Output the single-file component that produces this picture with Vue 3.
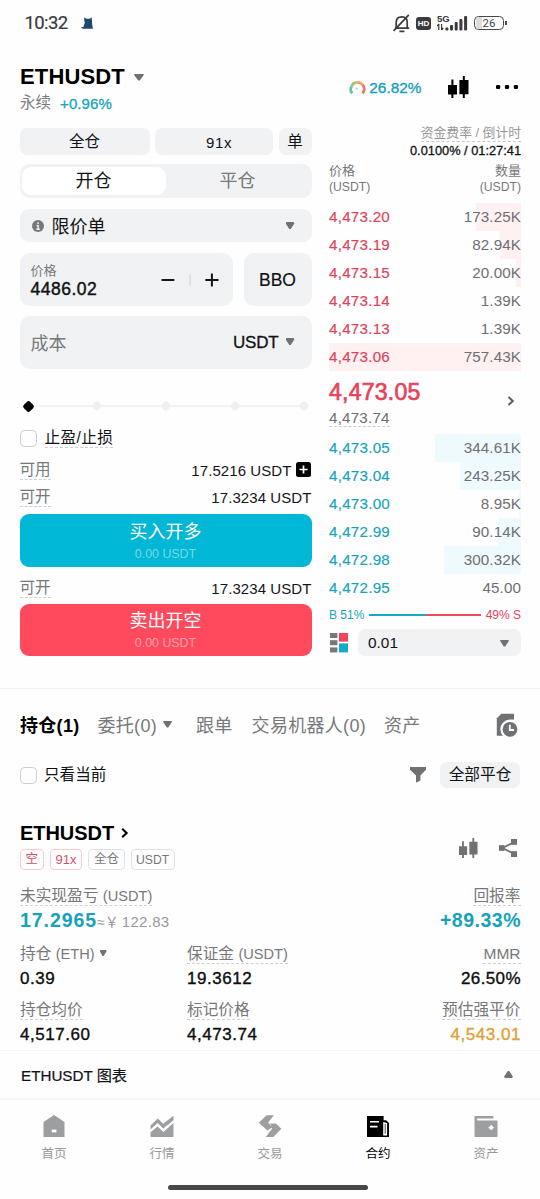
<script setup>
const asks = [
  { price: '4,473.20', qty: '173.25K', depth: 23.5 },
  { price: '4,473.19', qty: '82.94K', depth: 11 },
  { price: '4,473.15', qty: '20.00K', depth: 2.5 },
  { price: '4,473.14', qty: '1.39K', depth: 0 },
  { price: '4,473.13', qty: '1.39K', depth: 0 },
  { price: '4,473.06', qty: '757.43K', depth: 100 },
]
const bids = [
  { price: '4,473.05', qty: '344.61K', depth: 45 },
  { price: '4,473.04', qty: '243.25K', depth: 32 },
  { price: '4,473.00', qty: '8.95K', depth: 1 },
  { price: '4,472.99', qty: '90.14K', depth: 12 },
  { price: '4,472.98', qty: '300.32K', depth: 40 },
  { price: '4,472.95', qty: '45.00', depth: 0 },
]
const steps = [0, 1, 2, 3, 4]
</script>

<template>
  <div class="screen">
    <header class="status">
      <span class="clock">10:32</span>
      <svg class="cat" width="12" height="12" viewBox="0 0 12 12"><path d="M3.2 3.2 3.4.2 5.3 1.7h3.5L10.6.2l.4 3v2.9l.9 5.6H2.400C1 11.700.1 10.800.1 9.700c1 .8 2 .6 2.500-.2L3.800 6z" fill="#1f4770" /></svg>
      <span class="grow"></span>
      <svg class="bell" width="18" height="19" viewBox="0 0 18 19" fill="none" stroke="#3b3b3e" stroke-width="1.7">
        <path d="M3.2 13.4V8.2C3.2 4.6 5.5 2.9 8.8 2.9s5.4 1.9 5.4 5.3v5.2M1.8 14.2h14.4M15.8.9.6 16.8M6.4 17.4h5" />
      </svg>
      <span class="hd">HD</span>
      <svg class="signal" width="31" height="18" viewBox="0 0 31 18">
        <text x="0" y="8" class="g5">5G</text>
        <path d="M1.8 10v6M0 12.2 1.8 10M4.600 10v6M4.600 16l1.700-2" stroke="#3b3b3e" stroke-width="1.2" fill="none" />
        <g fill="#3b3b3e"><rect x="8.4" y="13.6" width="3" height="2.8" rx="1" /><rect x="13" y="11" width="3" height="5.4" rx="1" /><rect x="17.7" y="8" width="3" height="8.4" rx="1" /><rect x="22.4" y="5" width="3" height="11.4" rx="1" /><rect x="27.1" y="2" width="3" height="14.4" rx="1" /></g>
      </svg>
      <span class="battery"><i></i><b>26</b></span><span class="nub"></span>
    </header>

    <section class="head">
      <div>
        <div class="pair">ETHUSDT <i class="caret big"></i></div>
        <div class="sub"><span>永续</span><b>+0.96%</b></div>
      </div>
      <span class="grow"></span>
      <svg class="gauge" width="17" height="16" viewBox="0 0 17 16" fill="none" stroke-width="2.8">
        <path d="M3.2 13.4A6.4 6.4 0 0 1 2.5 6.4" stroke="#62c5a4" /><path d="M2.5 6.4A6.4 6.4 0 0 1 7.6 2.4" stroke="#a7c278" /><path d="M7.6 2.4A6.4 6.4 0 0 1 13.7 4.8" stroke="#efa35d" /><path d="M13.7 4.8A6.4 6.4 0 0 1 13.5 13.4" stroke="#e9765d" />
        <path d="M6.8 7.6 8.5 9.6" stroke="#b8c5c5" stroke-width="1.3" />
      </svg>
      <span class="ratio">26.82%</span>
      <svg class="candles" width="21" height="22" viewBox="0 0 21 22"><path d="M0 9h3.4V3.6h2V9H9v9.6H5.4V22h-2v-3.4H0zM11.4 4h3.4V0h2v4h3.7v14.2h-3.7V22h-2v-3.8h-3.4z" /></svg>
      <svg class="dots" width="24" height="6" viewBox="0 0 24 6"><rect x="0" y=".8" width="4.4" height="4.4" rx="1.3" /><rect x="9.3" y=".8" width="4.4" height="4.4" rx="1.3" /><rect x="18.6" y=".8" width="4.4" height="4.4" rx="1.3" /></svg>
    </section>

    <main class="trade">
      <div class="form">
        <div class="modes"><span>全仓</span><span class="lev">91x</span><span>单</span></div>
        <div class="segment"><span class="on">开仓</span><span>平仓</span></div>
        <div class="select">
          <svg width="12" height="12" viewBox="0 0 12 12"><circle cx="6" cy="6" r="6" fill="#77787b" /><path d="M6 2.2v2M4.6 5.6h1.6v3.8M4.4 9.2h3.4" stroke="#f1f2f4" stroke-width="1.4" fill="none" /></svg>
          <span>限价单</span><i class="caret"></i>
        </div>
        <div class="price-row">
          <div class="price">
            <div><small>价格</small><strong>4486.02</strong></div>
            <svg width="58" height="16" viewBox="0 0 58 16" fill="none" stroke="#151619" stroke-width="2"><path d="M.5 8h12.8M44.3 8h13.2M50.9 1.4v13.2" /><path d="M29 2.5v11" stroke="#c9cbce" stroke-width="1" /></svg>
          </div>
          <div class="bbo">BBO</div>
        </div>
        <div class="cost"><span>成本</span><b>USDT</b><i class="caret"></i></div>
        <div class="slider"><i v-for="s in steps" :key="s" :class="{ on: s === 0 }"></i></div>
        <div class="check tpsl"><i></i><span class="dash">止盈/止损</span></div>
        <div class="avail a1"><span class="dash">可用</span><b>17.5216 USDT</b>
          <svg width="15" height="15" viewBox="0 0 15 15"><rect width="15" height="15" rx="2.5" /><path d="M3.4 7.5h8.2M7.5 3.4v8.2" stroke="#fff" stroke-width="1.7" /></svg>
        </div>
        <div class="avail a2"><span class="dash">可开</span><b>17.3234 USDT</b></div>
        <button class="buy">买入开多<small>0.00 USDT</small></button>
        <div class="avail a3"><span class="dash">可开</span><b>17.3234 USDT</b></div>
        <button class="sell">卖出开空<small>0.00 USDT</small></button>
      </div>

      <div class="book">
        <div class="rate"><span>资金费率 / 倒计时</span></div>
        <div class="count">0.0100% / 01:27:41</div>
        <div class="cols"><div>价格<br /><em>(USDT)</em></div><div>数量<br /><em>(USDT)</em></div></div>
        <div class="rows asks">
          <div v-for="r in asks" :key="r.price" class="row"><i :style="{ width: r.depth + '%' }"></i><span>{{ r.price }}</span><b>{{ r.qty }}</b></div>
        </div>
        <div class="last">
          <div><strong>4,473.05</strong><span class="dash">4,473.74</span></div>
          <svg width="8" height="10" viewBox="0 0 8 10" fill="none" stroke="#5c5d60" stroke-width="2"><path d="M1.5 1 5.8 5 1.5 9" /></svg>
        </div>
        <div class="rows bids">
          <div v-for="r in bids" :key="r.price" class="row"><i :style="{ width: r.depth + '%' }"></i><span>{{ r.price }}</span><b>{{ r.qty }}</b></div>
        </div>
        <div class="balance"><span>B 51%</span><i></i><em>49% S</em></div>
        <div class="tick">
          <svg width="18" height="20" viewBox="0 0 18 20"><g fill="#77787b"><rect width="7.4" height="5" /><rect y="7.2" width="7.4" height="5" /><rect y="14.4" width="7.4" height="5" /></g><rect x="9" width="9" height="8.6" fill="#f04459" /><rect x="9" y="10.4" width="9" height="9" fill="#13acc8" /></svg>
          <div>0.01<i class="caret"></i></div>
        </div>
      </div>
    </main>

    <nav class="tabs">
      <b>持仓(1)</b><span class="t2">委托(0)<i class="caret"></i></span><span class="t3">跟单</span><span class="t4">交易机器人(0)</span><span class="t5">资产</span>
      <span class="grow"></span>
      <svg width="22" height="24" viewBox="0 0 22 24"><path d="M5.3.8H18v22H.8V5.3z" fill="#707174" /><path d="M14 6.6a9.7 9.7 0 1 0 0 19.400h8V6.600z" fill="#fefefe" /><circle cx="14" cy="16.3" r="7.4" fill="#707174" /><path d="M13.8 11.8V17H18" fill="none" stroke="#fff" stroke-width="1.8" /></svg>
    </nav>

    <div class="filter">
      <div class="check"><i></i><span>只看当前</span></div><span class="grow"></span>
      <svg width="16" height="16" viewBox="0 0 16 16"><path d="M0 0h16v2.8L10.4 8.600v5L6 15.800V8.600L0 2.800z" fill="#707174" /></svg>
      <span class="closeall">全部平仓</span>
    </div>

    <section class="position">
      <div class="ptop">
        <div>
          <div class="pname">ETHUSDT<svg width="8" height="10" viewBox="0 0 8 10" fill="none" stroke="#000" stroke-width="2.1"><path d="M1.2 .8 5.6 5 1.2 9.2" /></svg></div>
          <div class="tags"><span class="red">空</span><span class="red num">91x</span><span>全仓</span><span class="usdt">USDT</span></div>
        </div>
        <span class="grow"></span>
        <svg class="pc" width="19" height="20" viewBox="0 0 21 22" fill="#707174"><path d="M0 9h3.4V3.6h2V9H9v9.6H5.4V22h-2v-3.4H0zM11.4 4h3.4V0h2v4h3.7v14.2h-3.7V22h-2v-3.8h-3.4z" /></svg>
        <svg class="share" width="18" height="18" viewBox="0 0 18 18"><path d="M15 3.2 3.5 9 15 14.8" fill="none" stroke="#707174" stroke-width="1.8" /><g fill="#707174"><rect y="6.2" width="5.4" height="5.6" /><rect x="12" width="6" height="5.8" /><rect x="12" y="12.2" width="6" height="5.8" /></g></svg>
      </div>
      <div class="stats pnl">
        <div><label class="dash">未实现盈亏 <em>(USDT)</em></label><p class="teal">17.2965<span>≈￥<u>122.83</u></span></p></div>
        <div class="r"><label class="dash">回报率</label><p class="teal">+89.33%</p></div>
      </div>
      <div class="stats">
        <div><label>持仓 <em>(ETH)</em><i class="caret sm"></i></label><p>0.39</p></div>
        <div><label class="dash">保证金 <em>(USDT)</em></label><p>19.3612</p></div>
        <div class="r"><label class="dash mmr">MMR</label><p class="pct">26.50%</p></div>
      </div>
      <div class="stats last3">
        <div><label class="dash">持仓均价</label><p>4,517.60</p></div>
        <div><label class="dash">标记价格</label><p>4,473.74</p></div>
        <div class="r"><label class="dash">预估强平价</label><p class="amber">4,543.01</p></div>
      </div>
    </section>

    <div class="chart"><span>ETHUSDT 图表</span><i class="caret up"></i></div>

    <footer class="nav">
      <div><svg width="22" height="22" viewBox="0 0 22 22"><path d="M11 0 21.5 7v15H.5V7z" /><rect x="8.8" y="14.6" width="4.6" height="2.8" fill="#fff" /></svg>首页</div>
      <div><svg width="24" height="22" viewBox="0 0 24 22"><path d="M.5 10.6 7.8 3.6l5.4 5.2L23.5.8v4.4L13.2 13.4 7.6 8 .5 14.6zM.5 17.3l7.1-5.9 5.8 5.6L23.5 8v14H.5z" /></svg>行情</div>
      <div><svg width="24" height="22" viewBox="0 0 24 22"><path d="M8.6.2H16L10.200 7.600 14 12.400 9.400 15.400.8 7.800zM12 8.400h5.800l5.600 5.400-8 8.200H7.800l6.400-8.400z" /></svg>交易</div>
      <div class="active"><svg width="24" height="22" viewBox="0 0 24 22"><path d="M1 1h16.6v4.2h2.6L23 8v14H1z" /><path d="M4 6.8h9M4 11.6h7.500M18 8v11.600h2.300V8.600z" stroke="#fff" stroke-width="1.6" fill="none" /></svg>合约</div>
      <div><svg width="24" height="22" viewBox="0 0 24 22"><path d="M.5 1h19v2.6H3v2h20.500V22H.5z" /><path d="M17.3 10.2 19.600 12.600 17.300 15 15 12.600z" fill="#fff" stroke="#fff" /></svg>资产</div>
    </footer>
    <div class="home"></div>
  </div>
</template>

<style>
body { background: #fefefe; }
</style>

<style scoped>
* { box-sizing: border-box; }
.screen { width: 540px; height: 1199px; overflow: hidden; background: #fefefe; color: #111215; font-family: "Liberation Sans", "Noto Sans CJK SC", sans-serif; display: flex; flex-direction: column; white-space: nowrap; }
.screen > * { flex: none; }
svg { display: block; flex: none; }
em, i, u { font-style: normal; text-decoration: none; }
b { font-weight: 400; }
.grow { flex: 1; }
.caret { display: inline-block; width: 9px; height: 7px; background: #707174; clip-path: polygon(0 18%, 12% 0, 88% 0, 100% 18%, 58% 100%, 42% 100%); }
.caret.big { width: 10px; }
.caret.sm { width: 7px; height: 6px; }
.caret.up { transform: rotate(180deg); margin-top: 2px; }
.dash { border-bottom: 1px dashed #cfd0d3; }

.status { height: 46px; display: flex; align-items: center; padding: 0 33px 0 24.5px; }
.clock { font: 400 18.5px/24px Roboto, sans-serif; letter-spacing: -0.6px; color: #38393c; width: 56px; -webkit-text-stroke: .2px; }
.hd { width: 15px; height: 13px; border-radius: 3px; background: #3b3b3e; color: #fff; font: 700 8px/13px "Liberation Sans", sans-serif; text-align: center; margin: 1px 6px 0 5px; }
.g5 { font: 700 9.5px "Liberation Sans", sans-serif; fill: #3b3b3e; }
.battery { display: flex; width: 30px; height: 14px; border: 1.5px solid #47484b; border-radius: 4.5px; margin-left: 6px; color: #47484b; position: relative; justify-content: center; overflow: hidden; }
.battery i { position: absolute; left: 1px; top: 0; width: 6px; height: 12px; background: #dcdcde; }
.battery b { position: relative; font: 400 11.5px/13px Roboto, sans-serif; }
.nub { width: 2px; height: 4px; background: #47484b; margin-left: 1px; }

.head { height: 74px; padding: 18px 21.5px 0 20px; display: flex; }
.pair { font-size: 22px; font-weight: 700; line-height: 26px; letter-spacing: .15px; display: flex; align-items: center; color: #000; }
.pair .caret { margin-left: 9px; }
.sub { font-size: 15.5px; line-height: 20px; margin-top: 3px; color: #7b7c7f; display: flex; gap: 9px; }
.sub b { font-size: 15px; color: #16a5ba; letter-spacing: .1px; line-height: 21px; -webkit-text-stroke: .3px; }
.gauge { margin-top: 16px; }
.ratio { font-size: 15.4px; line-height: 20px; margin: 14px 26px 0 3px; color: #16a0bc; -webkit-text-stroke: .35px; }
.candles { margin-top: 12px; }
.dots { margin: 20px 0 0 27px; width: 23px; }

.trade { display: flex; padding: 0 19px 0 19.5px; gap: 17.5px; height: 536px; }
.form { width: 292px; padding-top: 8px; }
.modes { display: flex; height: 27px; gap: 5.5px; font-size: 15.5px; line-height: 27px; text-align: center; }
.modes span { background: #f1f2f4; border-radius: 7px; width: 33px; }
.modes span:first-child { width: 130px; }
.modes .lev { width: 118px; font-size: 15px; letter-spacing: .6px; line-height: 29px; padding-left: 10px; }
.segment { display: flex; margin-top: 9px; height: 34px; padding: 3px 2px; border-radius: 10px; background: #f1f2f4; font-size: 18px; line-height: 29px; text-align: center; color: #77787b; }
.segment span { flex: 1; }
.segment .on { background: #fff; border-radius: 9px; color: #111215; }
.select { display: flex; align-items: center; height: 33px; margin-top: 11px; padding: 0 17px 0 12px; border-radius: 9px; background: #f1f2f4; font-size: 18px; }
.select span { flex: 1; margin: -2px 0 0 8px; }
.price-row { display: flex; gap: 11px; height: 53px; margin-top: 11px; }
.price { width: 213px; border-radius: 10px; background: #f1f2f4; padding: 9px 14px 0 11px; display: flex; justify-content: space-between; }
.price svg { margin-top: 10px; }
.price small { display: block; font-size: 13px; line-height: 17px; color: #77787b; }
.price strong { display: block; font-size: 17.5px; font-weight: 400; line-height: 20px; letter-spacing: .5px; -webkit-text-stroke: .45px; }
.bbo { flex: 1; border-radius: 10px; background: #f1f2f4; text-align: center; font-size: 17.5px; line-height: 54px; -webkit-text-stroke: .2px; }
.cost { display: flex; align-items: center; height: 53px; margin-top: 10px; padding: 0 17px 2px 11px; border-radius: 10px; background: #f1f2f4; font-size: 18px; color: #77787b; }
.cost span { flex: 1; }
.cost b { font-size: 17px; color: #111215; letter-spacing: -.2px; margin-right: 7px; -webkit-text-stroke: .3px; padding-top: 2px; }
.slider { display: flex; justify-content: space-between; align-items: center; height: 18px; margin-top: 28px; padding: 0 4px; background: linear-gradient(#f1f2f3, #f1f2f3) center / 276px 2px no-repeat; }
.slider i { width: 8px; height: 8px; border-radius: 2.5px; background: #eff0f1; transform: rotate(45deg); }
.slider .on { background: #000; width: 9px; height: 9px; }
.check { display: flex; align-items: center; font-size: 15.6px; line-height: 20px; }
.check i { width: 17px; height: 17px; border: 1.5px solid #cdced0; border-radius: 4.5px; margin-right: 7px; }
.tpsl { height: 20px; margin-top: 13px; }
.tpsl span { height: 20px; line-height: 19px; margin-left: 1px; letter-spacing: .4px; }
.avail { display: flex; height: 20px; line-height: 20px; font-size: 15.5px; color: #77787b; }
.avail .dash { line-height: 19px; }
.avail b { margin-left: auto; font-size: 15px; color: #151619; letter-spacing: .08px; line-height: 21px; }
.avail svg { margin: 2px 1px 0 4px; }
.a1 { margin-top: 12px; }
.a2 { margin-top: 7px; }
.a3 { margin-top: 11px; }
button { display: block; width: 292px; height: 53px; border: 0; border-radius: 9px; margin-top: 7px; padding: 0; font: 18px/26px "Liberation Sans", "Noto Sans CJK SC", sans-serif; color: #fff; text-align: center; }
button small { display: block; font-size: 12.4px; line-height: 18px; color: rgba(255, 255, 255, .48); }
.buy { background: #00b7d5; }
.sell { background: #ff4a5e; height: 52px; margin-top: 6px; }

.book { width: 192px; }
.rate { height: 22px; padding-top: 3px; text-align: right; font-size: 12.8px; line-height: 20px; color: #96979a; }
.rate span { display: inline-block; height: 19px; border-bottom: 1px dashed #c8c9cc; }
.count { height: 18px; font-size: 12.8px; line-height: 18px; text-align: right; -webkit-text-stroke: .3px; }
.cols { display: flex; justify-content: space-between; height: 43px; padding-top: 3px; font-size: 13px; line-height: 16px; color: #77787b; }
.cols div + div { text-align: right; }
.cols em { font-size: 12.2px; }
.row { position: relative; display: flex; justify-content: space-between; height: 28px; line-height: 28px; font-size: 15.2px; letter-spacing: .24px; }
.row i { position: absolute; right: 0; top: 0; height: 100%; background: #fff1f2; }
.bids .row i { background: #eefafd; }
.row span, .row b { position: relative; }
.row b { color: #6e6f72; letter-spacing: .1px; }
.asks span { color: #dd4259; -webkit-text-stroke: .15px; }
.bids span { color: #16a3b8; -webkit-text-stroke: .15px; }
.last { display: flex; justify-content: space-between; height: 63px; padding: 6px 6.5px 0 0; }
.last svg { margin-top: 19px; }
.last strong { display: block; font-size: 23px; line-height: 30px; font-weight: 400; letter-spacing: .25px; color: #e5445b; -webkit-text-stroke: .7px; }
.last span { display: inline-block; font-size: 15.2px; line-height: 18px; height: 18px; margin-top: 2px; letter-spacing: .2px; color: #6e6f72; }
.balance { display: flex; align-items: center; height: 25px; font-size: 12px; color: #16a3b8; }
.balance i { flex: 1; height: 2px; margin: 0 5px; background: linear-gradient(90deg, #13acc8 51%, #ee4a5e 51%); }
.balance em { color: #dd4259; }
.tick { display: flex; align-items: center; height: 27px; margin-top: 2px; padding-left: 1px; gap: 10px; }
.tick div { flex: 1; height: 27px; display: flex; align-items: center; justify-content: space-between; padding: 1px 12px 0 10px; border-radius: 7px; background: #f1f2f4; font-size: 15.4px; }

.tabs { display: flex; align-items: center; height: 57px; margin-top: 32px; border-top: 1px solid #f3f3f4; padding: 14px 22px 0 20px; font-size: 18px; letter-spacing: .3px; color: #77787b; }
.tabs b { color: #000; font-weight: 700; }
.tabs svg { margin-top: 2px; }
.t2 { margin-left: 18px; display: flex; align-items: center; }
.t2 .caret { margin-left: 6px; }
.t3 { margin-left: 24px; }
.t4 { margin-left: 19px; }
.t5 { margin-left: 18px; }
.filter { display: flex; align-items: center; height: 26px; margin-top: 17px; padding: 0 20px; }
.closeall { width: 80px; height: 26px; margin-left: 14px; border-radius: 7px; background: #f1f2f4; font-size: 15.7px; line-height: 25px; text-align: center; }

.position { height: 263px; padding: 32px 19.5px 0 20px; border-bottom: 1px solid #f5f5f6; }
.ptop { display: flex; height: 50px; }
.pname { display: flex; align-items: center; gap: 7px; height: 26px; font-size: 20px; font-weight: 700; color: #000; letter-spacing: -.05px; }
.tags { display: flex; gap: 6px; margin-top: 3px; }
.tags span { height: 21px; border: 1px solid #e1e2e4; border-radius: 4px; padding: 0 4.5px; font-size: 12.5px; line-height: 19px; color: #77787b; }
.tags .red { border-color: #f8cbd2; color: #d4506a; }
.tags .num { font-size: 13px; line-height: 20px; padding: 0 5px; }
.tags .usdt { font-size: 12.2px; line-height: 20px; }
.pc { margin-top: 18px; }
.share { margin: 19px 3.5px 0 21px; }
.stats { display: grid; grid-template-columns: 167px 1fr auto; margin-top: 14px; }
.stats.pnl { grid-template-columns: 1fr auto; margin-top: 16px; }
.stats.last3 { margin-top: 12px; }
.stats label { display: inline-block; height: 20px; line-height: 20px; font-size: 15.7px; color: #77787b; vertical-align: top; }
.stats em { font-size: 14.6px; }
.stats .mmr { font-size: 15.5px; }
.stats .caret { margin-left: 5px; vertical-align: 3px; }
.stats p { margin: 4px 0 0; height: 20px; line-height: 21px; font-size: 17px; letter-spacing: .55px; color: #0b0c0e; -webkit-text-stroke: .35px; }
.stats .teal { font-size: 19.5px; letter-spacing: .95px; font-weight: 700; color: #16a3b8; -webkit-text-stroke: 0; }
.stats .teal span { font-size: 14px; font-weight: 400; letter-spacing: 0; color: #98999c; }
.stats u { font-size: 15px; letter-spacing: .3px; margin-left: 3px; }
.r { text-align: right; }
.stats .r p { margin-right: -.5px; }
.stats .pct { letter-spacing: .4px; }
.stats .r .teal { letter-spacing: .5px; }
.stats .amber { color: #dfa035; }

.chart { display: flex; justify-content: space-between; align-items: center; height: 49px; padding: 0 27px 2px 21px; border-bottom: 2px solid #f5f5f6; font-size: 15.2px; -webkit-text-stroke: .2px; }
.nav { display: flex; height: 80px; padding-top: 15px; font-size: 12.5px; line-height: 18px; color: #97989b; }
.nav div { flex: 1; display: flex; flex-direction: column; align-items: center; gap: 8px; }
.nav svg { fill: #9c9ea0; }
.nav .active { color: #000; }
.nav .active svg { fill: #000; }
.home { width: 200px; height: 5px; margin: 5px auto 0 168px; border-radius: 3px; background: #474749; }
</style>
